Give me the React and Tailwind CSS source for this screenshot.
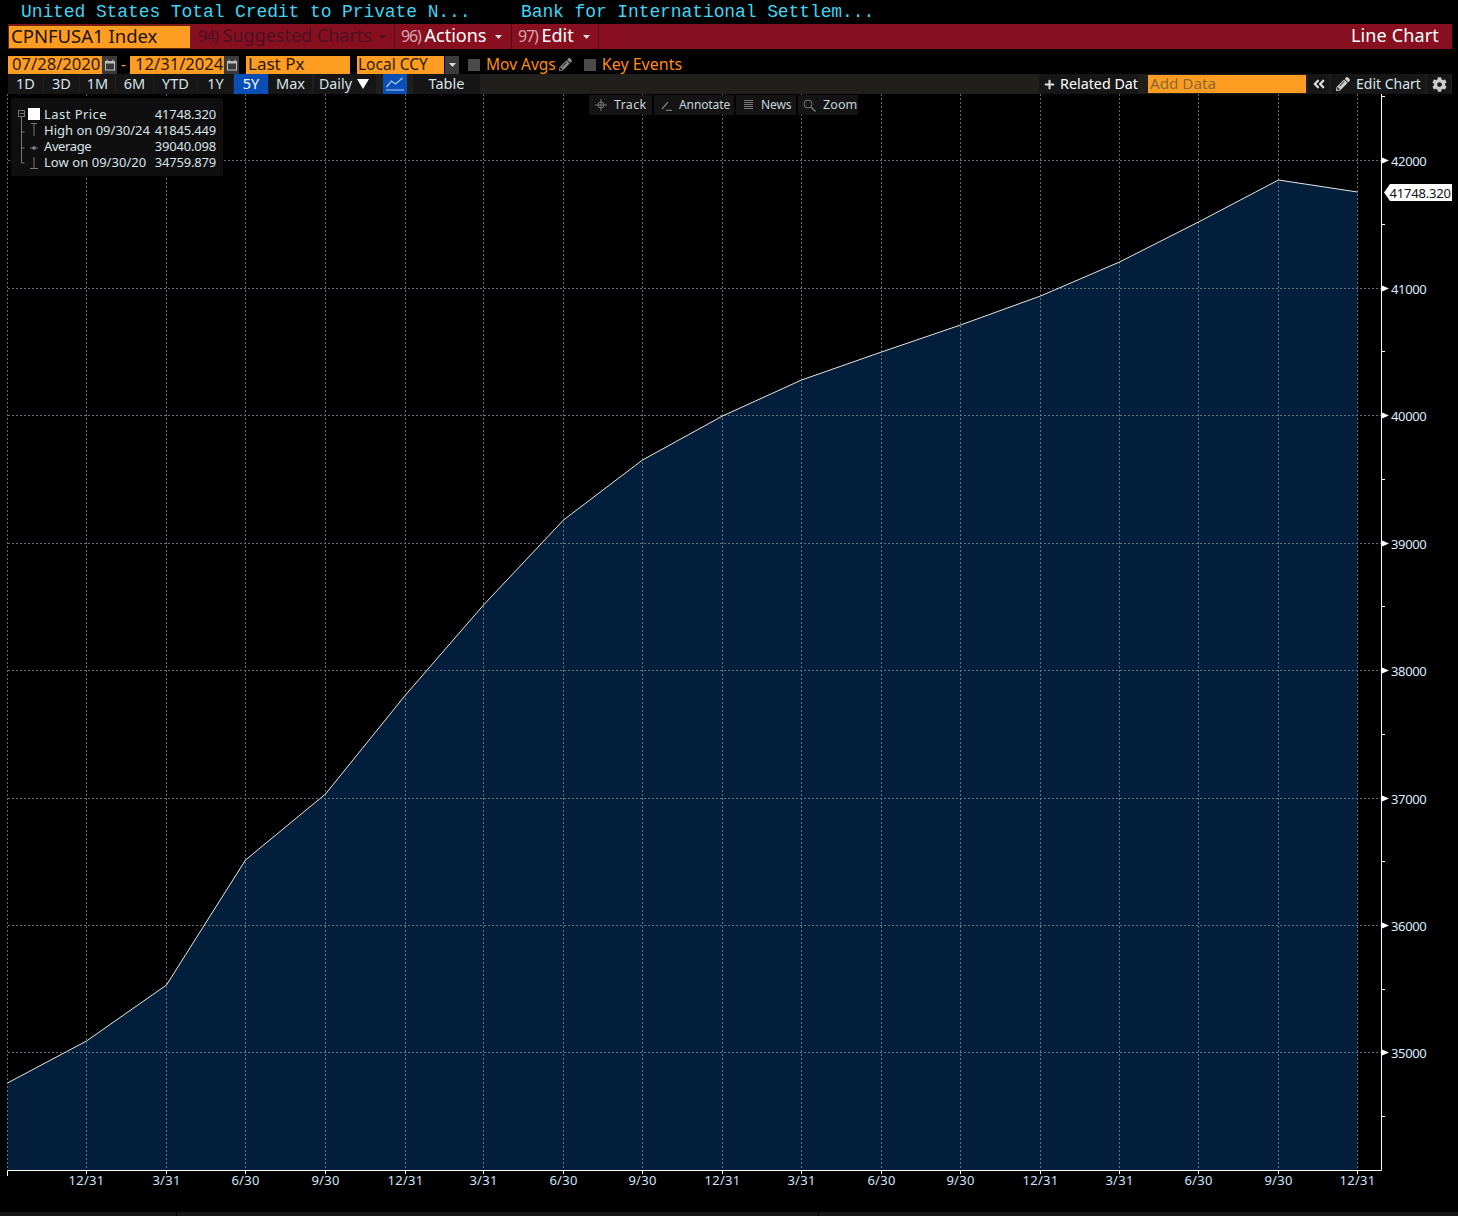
import React from "react";
import { FaPencilAlt, FaCog, FaAngleDoubleLeft, FaPlus } from "react-icons/fa";

const xs = [7.5, 86.5, 166.5, 245.5, 325.5, 405.5, 483.5, 563.5, 642.5, 722.5, 801.5, 881.5, 960.5, 1040.5, 1119.5, 1198.5, 1278.5, 1357.5];
const ys = [1083, 1041, 985, 860, 794, 695, 605, 520, 460, 416, 380, 352, 325, 296, 262, 222, 180, 192];
const xl = ["", "12/31", "3/31", "6/30", "9/30", "12/31", "3/31", "6/30", "9/30", "12/31", "3/31", "6/30", "9/30", "12/31", "3/31", "6/30", "9/30", "12/31"];
const major = [[160, "42000"], [288, "41000"], [415, "40000"], [543, "39000"], [670, "38000"], [798, "37000"], [925, "36000"], [1052, "35000"]];
const minor = [96, 224, 351, 479, 606, 734, 861, 989, 1116];
const line = xs.map((x, i) => `${x},${ys[i]}`).join(" ");
const area = `7.5,1170 ${line} 1357.5,1170`;
const F = "Noto Sans, sans-serif";

function Chart() {
  return (
    <svg width="1458" height="1118" viewBox="0 94 1458 1118" className="block" style={{ fontFamily: F }}>
      <polygon points={area} fill="#021e3a" />
      <g stroke="#8a9099" strokeWidth="1" strokeDasharray="2 2" opacity="0.75">
        {major.map(([y]) => <line key={y} x1="8" x2="1381" y1={y + 0.5} y2={y + 0.5} />)}
        {xs.map((x) => <line key={x} x1={x} x2={x} y1="94" y2="1170" />)}
      </g>
      <polyline points={line} fill="none" stroke="#e6e6e6" strokeWidth="1" />
      <path d="M1381.5 94V1170.5H7.5V1176" fill="none" stroke="#fff" strokeWidth="1" />
      {xs.slice(1).map((x) => <line key={x} x1={x} x2={x} y1="1170" y2="1174" stroke="#fff" />)}
      {minor.map((y) => <line key={y} x1="1381" x2="1385" y1={y + 0.5} y2={y + 0.5} stroke="#fff" />)}
      {major.map(([y, t]) => (
        <g key={y}>
          <polygon points={`1382,${y - 2.5} 1389,${y + 0.5} 1382,${y + 3.5}`} fill="#fff" />
          <text x="1391" y={y + 5.5} fontSize="13" letterSpacing="-0.35" fill="#dcecff">{t}</text>
        </g>
      ))}
      {xs.map((x, i) => i > 0 && <text key={x} x={x} y="1185" textAnchor="middle" fontSize="13" letterSpacing="0.25" fill="#cfe4fb">{xl[i]}</text>)}
      <polygon points="1384,192.5 1390,184 1452,184 1452,201 1390,201" fill="#fff" />
      <text x="1389.5" y="198" fontSize="13" letterSpacing="-0.2" fill="#111">41748.320</text>
    </svg>
  );
}

const periods = [["1D", "w-[35px]"], ["3D", "w-[35px]"], ["1M", "w-[35px]"], ["6M", "w-[37px]"], ["YTD", "w-[43px]"], ["1Y", "w-[35px]"]];
const legend = [
  ["Last Price", "41748.320", "tracking-[0.45px]"],
  ["High on 09/30/24", "41845.449", ""],
  ["Average", "39040.098", "tracking-[-0.4px]"],
  ["Low on 09/30/20", "34759.879", "tracking-[0.05px]"],
];

function Cal() {
  return (
    <svg width="12" height="12" viewBox="0 0 12 12" fill="none">
      <path d="M1 2h10v2.5H1z" fill="#bdbdbd" />
      <path d="M3 .5v2M9 .5v2" stroke="#bdbdbd" />
      <rect x="1.5" y="2.5" width="9" height="8.5" stroke="#bdbdbd" />
    </svg>
  );
}

function Arrow({ className }) {
  return (
    <svg width="7" height="4" viewBox="0 0 7 4" className={className}>
      <polygon points="0,0 7,0 3.5,4" fill="currentColor" />
    </svg>
  );
}

function Tool({ icon, label, className, textClass }) {
  return (
    <div className={`flex h-[20px] items-center bg-[#141414] text-[#c8d4dc] ${className}`}>
      {icon}
      <span className={textClass}>{label}</span>
    </div>
  );
}

export default function App() {
  return (
    <div className="relative h-[1216px] w-[1458px] overflow-hidden bg-black text-white" style={{ fontFamily: F }}>
      <div className="flex h-[24px] items-center pl-[21px] text-[18px] leading-[24px] tracking-[-0.1px] text-[#3fd4f2]" style={{ fontFamily: "Liberation Mono, monospace" }}>
        <span className="w-[500px]">United States Total Credit to Private N...</span>
        <span>Bank for International Settlem...</span>
      </div>

      <div className="ml-[8px] flex h-[25px] w-[1444px] items-center bg-[#880f1f] pb-[2px] text-[18px]">
        <div className="-mb-[2px] flex h-[24px] w-[183px] items-center border border-[#5e2a08] bg-[#ff9d23] pb-[2px] pl-[2px] text-[18.5px] text-[#1b1206]">CPNFUSA1 Index</div>
        <div className="-mb-[2px] flex h-[25px] w-[204px] items-center gap-[5px] border-r border-[#500812] pb-[2px] pl-[7px] text-[#4b1222]">
          <span className="text-[16px] tracking-[-1.2px]">94)</span><span>Suggested Charts</span><Arrow className="ml-[2px] mt-[2px]" />
        </div>
        <div className="-mb-[2px] flex h-[25px] w-[117px] items-center gap-[4px] border-r border-[#500812] pb-[2px] pl-[6px] text-white">
          <span className="text-[16px] tracking-[-1.2px] text-[#d3a6ad]">96)</span><span>Actions</span><Arrow className="ml-[5px] mt-[2px] text-[#ddd]" />
        </div>
        <div className="-mb-[2px] flex h-[25px] w-[87px] items-center gap-[4px] border-r border-[#500812] pb-[2px] pl-[6px] text-white">
          <span className="text-[16px] tracking-[-1.2px] text-[#d3a6ad]">97)</span><span>Edit</span><Arrow className="ml-[5px] mt-[2px] text-[#ddd]" />
        </div>
        <div className="ml-auto pr-[13px] tracking-[0.15px] text-white">Line Chart</div>
      </div>

      <div className="ml-[8px] mt-[6px] flex h-[19px] items-center text-[15.5px] text-[#2a1a05]">
        <div className="flex h-[18px] w-[94px] items-center bg-[#ff9d23] pl-[4px] text-[16.6px]">07/28/2020</div>
        <div className="flex h-[18px] w-[15px] items-center justify-center bg-[#3a3a3a]"><Cal /></div>
        <div className="flex w-[13px] justify-center text-[#ff9d23]">-</div>
        <div className="flex h-[18px] w-[94px] items-center bg-[#ff9d23] pl-[5px] text-[16.6px]">12/31/2024</div>
        <div className="flex h-[18px] w-[15px] items-center justify-center bg-[#3a3a3a]"><Cal /></div>
        <div className="ml-[7px] flex h-[18px] w-[104px] items-center bg-[#ff9d23] pb-[2px] pl-[2px] text-[17px]">Last Px</div>
        <div className="ml-[7px] flex h-[18px] w-[87px] items-center bg-[#ff9d23] pl-[1px]">Local CCY</div>
        <div className="ml-px flex h-[18px] w-[14px] items-center justify-center bg-[#3c3c3c] text-[#ddd]"><Arrow /></div>
        <div className="ml-[9px] h-[12px] w-[12px] bg-[#4a4a4a]" />
        <div className="ml-[6px] text-[#ff8c0f]">Mov Avgs</div>
        <FaPencilAlt size={13} color="#8a8a8a" className="ml-[3px]" />
        <div className="ml-[12px] h-[12px] w-[12px] bg-[#4a4a4a]" />
        <div className="ml-[6px] pb-[2px] text-[16px] text-[#ff8c0f]">Key Events</div>
      </div>

      <div className="ml-[8px] flex h-[20px] w-[1444px] items-center bg-[#211f1c] text-[14.5px] text-[#d9e4ea]">
        {periods.map(([t, w]) => (
          <div key={t} className={`mr-px flex h-full items-center justify-center bg-[#161616] ${w}`}>{t}</div>
        ))}
        <div className="flex h-full w-[34px] items-center justify-center bg-[#0a4fb5] text-white">5Y</div>
        <div className="ml-px flex h-full w-[43px] items-center justify-center bg-[#161616]">Max</div>
        <div className="ml-[2px] flex h-full w-[62px] items-center gap-[5px] bg-[#161616] pl-[5px] text-[14.2px]">
          Daily
          <svg width="12" height="10" viewBox="0 0 12 10"><polygon points="0,0 12,0 6,10" fill="#fff" /></svg>
        </div>
        <div className="ml-[7px] flex h-full w-[24px] items-center justify-center bg-[#0a4fb5]">
          <svg width="18" height="14" viewBox="0 0 18 14" fill="none" stroke="#a8cdfb" strokeWidth="1.2">
            <path d="M0 13h18M0.5 10l5-6 4 3 7-6" />
          </svg>
        </div>
        <div className="ml-[6px] flex h-full w-[67px] items-center justify-center bg-[#161616]">Table</div>
        <div className="ml-[559px] flex h-full w-[99px] items-center gap-[5px] overflow-hidden whitespace-nowrap bg-[#161616] pl-[5px] text-[14.3px] text-white">
          <FaPlus size={11} color="#ddd" className="shrink-0" />Related Dat
        </div>
        <div className="ml-[10px] flex h-[18px] w-[158px] items-center bg-[#ff9d23] pb-[1px] pl-[2px] text-[15.2px] text-[#8a6a30]">Add Data</div>
        <div className="ml-[2px] flex h-full w-[21px] items-center justify-center bg-[#161616]"><FaAngleDoubleLeft size={14} color="#ddd" /></div>
        <div className="ml-[2px] flex h-full w-[94px] items-center gap-[6px] whitespace-nowrap bg-[#161616] pb-[1px] pl-[5px] text-[14px]"><FaPencilAlt size={14} color="#ccc" />Edit Chart</div>
        <div className="ml-[2px] flex h-full w-[24px] items-center justify-center bg-[#161616]"><FaCog size={15} color="#ccc" /></div>
      </div>

      <div className="relative">
        <Chart />

        <div className="absolute left-[11px] top-[4px] flex h-[78px] w-[212px] flex-col rounded-[2px] bg-[#0f0f0f] pl-[33px] pt-[8px] text-[13px] leading-[16px] text-[#d8e2ea]">
          <svg width="30" height="64" viewBox="0 0 30 64" className="absolute left-[6px] top-[8px]" fill="none" stroke="#777">
            <rect x="1.5" y="4.5" width="6" height="6" />
            <path d="M3 7.5h4M4.5 11v46h3M4.5 26h3M4.5 42h3" />
            <rect x="11" y="2" width="12" height="12" fill="#fff" stroke="none" />
            <path d="M14 17.5h6M17 18v12M13 42h8" />
            <circle cx="17" cy="42" r="1.5" fill="#777" />
            <path d="M17 51v11M13 62.5h8" />
          </svg>
          {legend.map(([a, b, t]) => (
            <div key={a} className="flex h-[16px] items-center justify-between whitespace-nowrap pr-[7px]">
              <span className={t}>{a}</span><span className="tracking-[-0.2px]">{b}</span>
            </div>
          ))}
        </div>

        <div className="absolute left-[589px] top-0 flex gap-[2px] pt-px">
          <Tool className="w-[63px] gap-[7px] pl-[6px] text-[12.5px]" textClass="tracking-[0.3px]"
            icon={<svg width="12" height="12" viewBox="0 0 12 12" fill="none" stroke="#777"><circle cx="6" cy="6" r="3" /><path d="M6 0v12M0 6h12" /></svg>} label="Track" />
          <Tool className="w-[80px] gap-[7px] pl-[7px] text-[12px]" textClass="tracking-[-0.1px]"
            icon={<svg width="11" height="11" viewBox="0 0 11 11" fill="none" stroke="#777"><path d="M1 9l6-7M5 10.5h6" strokeWidth="1.4" /></svg>} label="Annotate" />
          <Tool className="w-[60px] gap-[8px] pl-[8px] text-[12px]" textClass="tracking-[-0.1px]"
            icon={<svg width="9" height="10" viewBox="0 0 9 10" stroke="#777"><path d="M0 .5h9M0 2.5h9M0 4.5h9M0 6.5h9M0 8.5h9" /></svg>} label="News" />
          <Tool className="w-[60px] gap-[7px] pl-[5px] text-[12.5px]" textClass="tracking-[0.1px]"
            icon={<svg width="13" height="13" viewBox="0 0 13 13" fill="none" stroke="#777"><circle cx="5" cy="5" r="4" /><path d="M8 8l4.5 4.5" strokeWidth="1.5" /></svg>} label="Zoom" />
        </div>
      </div>

      <div className="absolute bottom-0 left-0 flex h-[4px] w-full">
        <div className="h-full w-[176px] bg-[#161616]" />
        <div className="ml-px h-full w-[641px] bg-[#161616]" />
        <div className="ml-px h-full flex-1 bg-[#161616]" />
      </div>
    </div>
  );
}
